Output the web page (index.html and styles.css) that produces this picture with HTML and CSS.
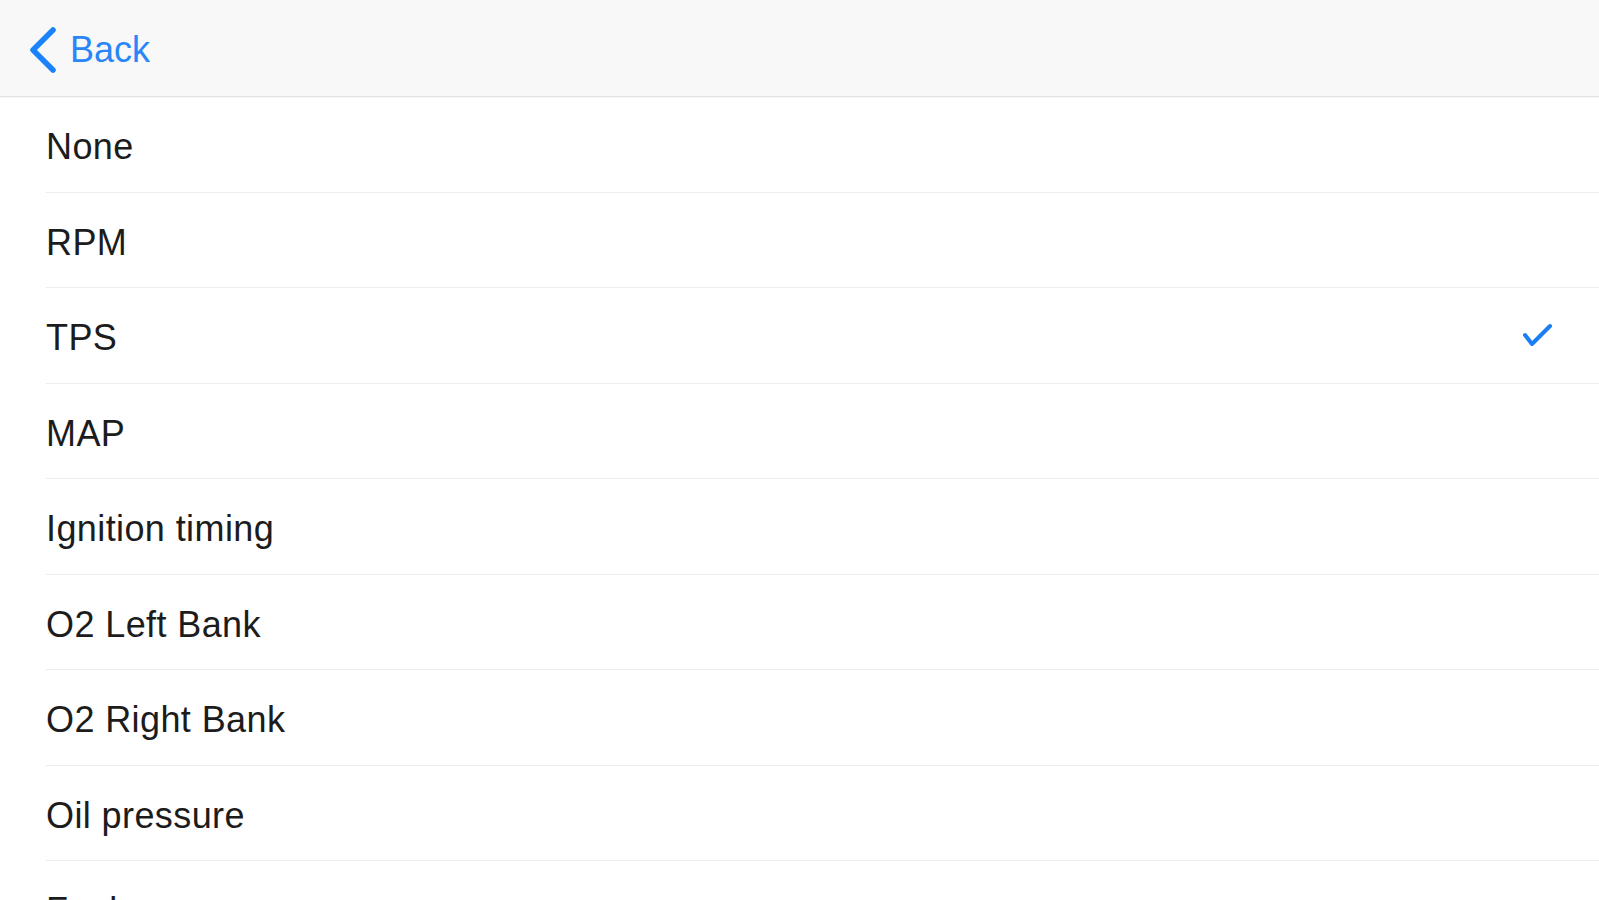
FILE: index.html
```html
<!DOCTYPE html>
<html>
<head>
<meta charset="utf-8">
<link rel="stylesheet" href="styles.css">
</head>
<body>
<header class="nav">
  <a class="back">
    <svg class="chev" width="30" height="46" viewBox="0 0 30 46"><polyline points="25,3 5,23 25,43" fill="none" stroke="#1a82fb" stroke-width="5.5" stroke-linecap="round" stroke-linejoin="round"/></svg>
    <span>Back</span>
  </a>
</header>
<ul class="list">
  <li class="row"><span>None</span></li>
  <li class="row"><span>RPM</span></li>
  <li class="row"><span>TPS</span>
    <svg class="check" width="32" height="26" viewBox="0 0 32 26"><polyline points="3,12 10,21 28,3" fill="none" stroke="#1a7ff5" stroke-width="4" stroke-linecap="round" stroke-linejoin="round"/></svg>
  </li>
  <li class="row"><span>MAP</span></li>
  <li class="row"><span>Ignition timing</span></li>
  <li class="row"><span>O2 Left Bank</span></li>
  <li class="row"><span>O2 Right Bank</span></li>
  <li class="row"><span>Oil pressure</span></li>
  <li class="row"><span>Fuel pressure</span></li>
</ul>
</body>
</html>
```
FILE: styles.css
```css
html, body {
  margin: 0;
  padding: 0;
  background: #ffffff;
  font-family: "Liberation Sans", Arial, sans-serif;
  overflow: hidden;
}
.nav {
  height: 92px;
  padding-top: 4px;
  background: #f8f8f8;
  border-bottom: 1px solid #e2e2e2;
  box-shadow: 0 1px 2px rgba(0,0,0,0.04);
  display: flex;
  align-items: center;
  padding-left: 28px;
}
.back {
  display: flex;
  align-items: center;
  color: #2a86f6;
  font-size: 36px;
  gap: 12px;
}
.chev {
  display: block;
}
.list {
  list-style: none;
  margin: 0;
  padding: 0 0 0 46px;
}
.row {
  height: 94.5px;
  border-bottom: 1px solid #ededed;
  display: flex;
  align-items: center;
  justify-content: space-between;
  padding-right: 45px;
  font-size: 36px;
  letter-spacing: 0.4px;
  color: #1c1c1c;
}
.row span {
  padding-top: 6px;
}
.check {
  display: block;
  margin-top: 1px;
}
```
